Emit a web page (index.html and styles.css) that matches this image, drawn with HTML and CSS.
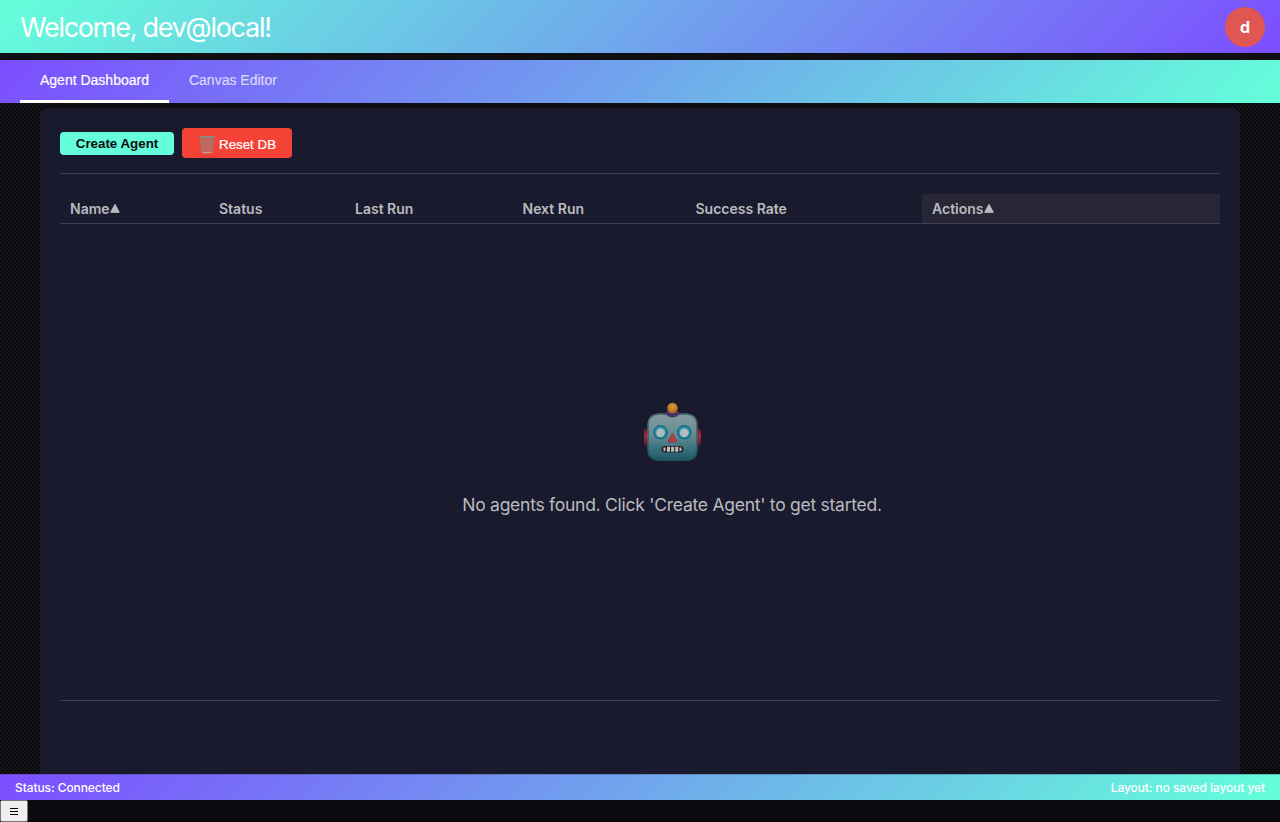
FILE: index.html
```html
<!DOCTYPE html>
<html lang="en">
<head>
<meta charset="utf-8">
<title>Agent Dashboard</title>
<link rel="stylesheet" href="styles.css">
</head>
<body>
<header class="header">
  <h1 class="title">Welcome, dev@local!</h1>
  <div class="avatar">d</div>
</header>
<nav class="tabs">
  <button class="tab active"><span>Agent Dashboard</span></button>
  <button class="tab"><span>Canvas Editor</span></button>
</nav>
<main class="dashboard">
  <div class="toolbar">
    <button class="create">Create Agent</button>
    <button class="reset">
      <svg class="trash" width="18" height="18" viewBox="0 0 18 18">
        <path d="M2 2 L16 2 L14.2 16 Q9 17.6 3.8 16Z" fill="#cb5f56"/>
        <path d="M3 5l10 11M6 4l8 9M10 4l5 6M15 5L4 15M12 4L3 12M8 4L3 8M15 9l-7 7M3 9l6 7" stroke="#a5827b" stroke-width=".7" fill="none"/>
        <path d="M2.2 2 L4 16M15.8 2 L14 16" stroke="#98766f" stroke-width="1" fill="none"/>
        <rect x="1" y="0" width="16" height="2.2" rx="1" fill="#918780"/>
        <path d="M3.7 15.2Q9 17 14.3 15.2V16.4Q9 18 3.7 16.4Z" fill="#b7a79f"/>
      </svg>
      <span>Reset DB</span>
    </button>
  </div>
  <div class="columns">
    <div class="col"><span>Name</span><svg class="sort" width="10" height="10" viewBox="0 0 10 10"><path d="M5 1.2L9.3 9.3H.7Z"/></svg></div>
    <div class="col"><span>Status</span></div>
    <div class="col"><span>Last Run</span></div>
    <div class="col"><span>Next Run</span></div>
    <div class="col"><span>Success Rate</span></div>
    <div class="col actions"><span>Actions</span><svg class="sort" width="10" height="10" viewBox="0 0 10 10"><path d="M5 1.2L9.3 9.3H.7Z"/></svg></div>
  </div>
  <section class="empty">
    <svg class="robot" width="60" height="60" viewBox="0 0 60 60">
      <defs>
        <linearGradient id="face" x1="0" y1="0" x2="0" y2="1"><stop offset="0" stop-color="#859da0"/><stop offset=".45" stop-color="#668b92"/><stop offset=".75" stop-color="#37717d"/><stop offset="1" stop-color="#195563"/></linearGradient>
        <linearGradient id="ear" x1="0" y1="0" x2="0" y2="1"><stop offset="0" stop-color="#6e1725"/><stop offset=".4" stop-color="#a52b3b"/><stop offset="1" stop-color="#5c1624"/></linearGradient>
        <radialGradient id="bulb" cx=".5" cy=".35" r=".6"><stop offset="0" stop-color="#d9a23c"/><stop offset="1" stop-color="#ad6815"/></radialGradient>
      </defs>
      <rect x="2" y="27" width="6" height="17" rx="2" fill="url(#ear)"/>
      <rect x="53" y="27" width="6" height="17" rx="2" fill="url(#ear)"/>
      <rect x="5.5" y="11.5" width="50" height="47.5" rx="10.5" fill="url(#face)"/>
      <rect x="6.2" y="12.2" width="48.6" height="46.1" rx="10" fill="none" stroke="#24505e" stroke-opacity=".65" stroke-width="1.4"/>
      <path d="M23 12Q24 8 30.5 8T38 12Q30.5 19 23 12Z" fill="#493364"/>
      <circle cx="30.5" cy="6" r="5.3" fill="url(#bulb)"/>
      <circle cx="18.5" cy="30.3" r="7.3" fill="#156f87"/>
      <circle cx="42.3" cy="30.3" r="7.3" fill="#156f87"/>
      <circle cx="18.5" cy="30.3" r="5.7" fill="#3495a6"/>
      <circle cx="42.3" cy="30.3" r="5.7" fill="#3495a6"/>
      <circle cx="18.5" cy="30.8" r="4.3" fill="#b1bcc0"/>
      <circle cx="42.3" cy="30.8" r="4.3" fill="#b1bcc0"/>
      <path d="M30.5 31L35 40H26Z" fill="#b73b3f" stroke="#8b3842" stroke-width=".7" stroke-linejoin="round"/>
      <rect x="19.5" y="44" width="22" height="6.5" rx="3.2" fill="#232126"/>
      <path d="M21.5 45.5h2v3.6h-2zM25 44.8h3v4.9h-3zM29.1 44.8h3v4.9h-3zM33.2 44.8h3v4.9h-3zM37.5 45.5h2v3.6h-2z" fill="#bcbcbb"/>
    </svg>
    <p class="message">No agents found. Click 'Create Agent' to get started.</p>
  </section>
</main>
<footer class="status"><span class="connection">Status: Connected</span><span class="layout">Layout: no saved layout yet</span></footer>
<div class="bottom"><button class="menu" aria-label="Menu"><svg width="10" height="9" viewBox="0 0 10 9"><path d="M1 1.5h8M1 4.5h8M1 7.5h8" stroke="#000" stroke-width="1.2"/></svg></button></div>
</body>
</html>
```
FILE: styles.css
```css
* { box-sizing: border-box; }
body {
  margin: 0;
  height: 822px;
  overflow: hidden;
  display: flex;
  flex-direction: column;
  font-family: Inter, "Liberation Sans", sans-serif;
  color: #fff;
  background-color: #0a0a0e;
  background-image: conic-gradient(rgba(255,255,255,.04) 25%, transparent 0 50%, rgba(255,255,255,.04) 0 75%, transparent 0);
  background-size: 4px 4px;
}
button { border: 0; margin: 0; font-family: "Liberation Sans", Arial, sans-serif; }
span { white-space: nowrap; }
.header {
  height: 53px;
  flex: none;
  display: flex;
  align-items: center;
  justify-content: space-between;
  padding: 0 15px 0 20px;
  background: linear-gradient(135deg, #64ffda, #7c4dff);
}
.title { margin: 0; font-size: 27px; font-weight: 400; letter-spacing: -1.27px; line-height: 34px; padding-top: 2px; }
.avatar {
  width: 40px;
  height: 40px;
  border-radius: 50%;
  background: #e05652;
  display: grid;
  place-items: center;
  font-size: 16px;
  font-weight: 700;
}
.tabs {
  flex: none;
  height: 43px;
  margin-top: 7px;
  padding-left: 20px;
  display: flex;
  background: linear-gradient(135deg, #7c4dff, #64ffda);
}
.tab {
  height: 43px;
  padding: 0 20px;
  background: none;
  border-bottom: 3px solid transparent;
  color: rgba(255,255,255,.7);
  font-size: 14px;
  -webkit-text-stroke: .2px;
}
.tab.active { color: #fff; border-bottom-color: #fff; }
.dashboard {
  flex: 1;
  min-height: 0;
  margin: 5px 40px 0;
  padding: 20px 20px 0;
  background: #1a1a2e;
  border-radius: 8px 8px 0 0;
}
.toolbar {
  height: 46px;
  display: flex;
  gap: 8px;
  align-items: flex-start;
  border-bottom: 1px solid #3d3d5c;
}
.create {
  width: 114px;
  height: 23px;
  margin-top: 4px;
  padding: 0;
  border-radius: 4px;
  background: #64ffda;
  color: #0a0a0f;
  font-size: 13.33px;
  font-weight: 700;
}
.reset {
  width: 110px;
  height: 30px;
  padding: 3px 0 0 16px;
  display: flex;
  gap: 3px;
  align-items: center;
  border-radius: 4px;
  background: #f44336;
  color: #fff;
  font-size: 13.33px;
  -webkit-text-stroke: .2px;
}
.trash { flex: none; }
.columns {
  margin-top: 20px;
  height: 30px;
  display: grid;
  grid-template-columns: 149px 136px 167.5px 173px 236.5px 298px;
  border-bottom: 1px solid #3d3d5c;
}
.col {
  display: flex;
  align-items: center;
  padding: 0 10px 1px;
  font-size: 14px;
  font-weight: 600;
  color: #bababe;
}
.actions { background: #272635; }
.sort { fill: #bababe; stroke: #bababe; stroke-width: 1; stroke-linejoin: round; }
.empty {
  height: 477px;
  padding: 178px 0 0 64px;
  display: flex;
  flex-direction: column;
  align-items: center;
  border-bottom: 1px solid #3d3d5c;
}
.robot { flex: none; }
.message { margin: 32px 0 0; font-size: 17.5px; letter-spacing: -.26px; line-height: 22px; color: #bababe; white-space: nowrap; }
.status {
  flex: none;
  height: 26px;
  padding: 0 15px 1px;
  display: flex;
  align-items: center;
  justify-content: space-between;
  border-top: 1px solid rgba(61,61,92,.3);
  background: linear-gradient(135deg, #7c4dff, #64ffda);
  font-size: 12px;
  font-weight: 450;
}
.connection, .layout { letter-spacing: -.08px; }
.bottom { flex: none; height: 22px; background: #0a0a0f; }
.menu {
  width: 28px;
  height: 22px;
  padding: 0;
  display: grid;
  place-items: center;
  background: #efefef;
  border: 1px solid #767676;
  border-radius: 2px;
}
```
